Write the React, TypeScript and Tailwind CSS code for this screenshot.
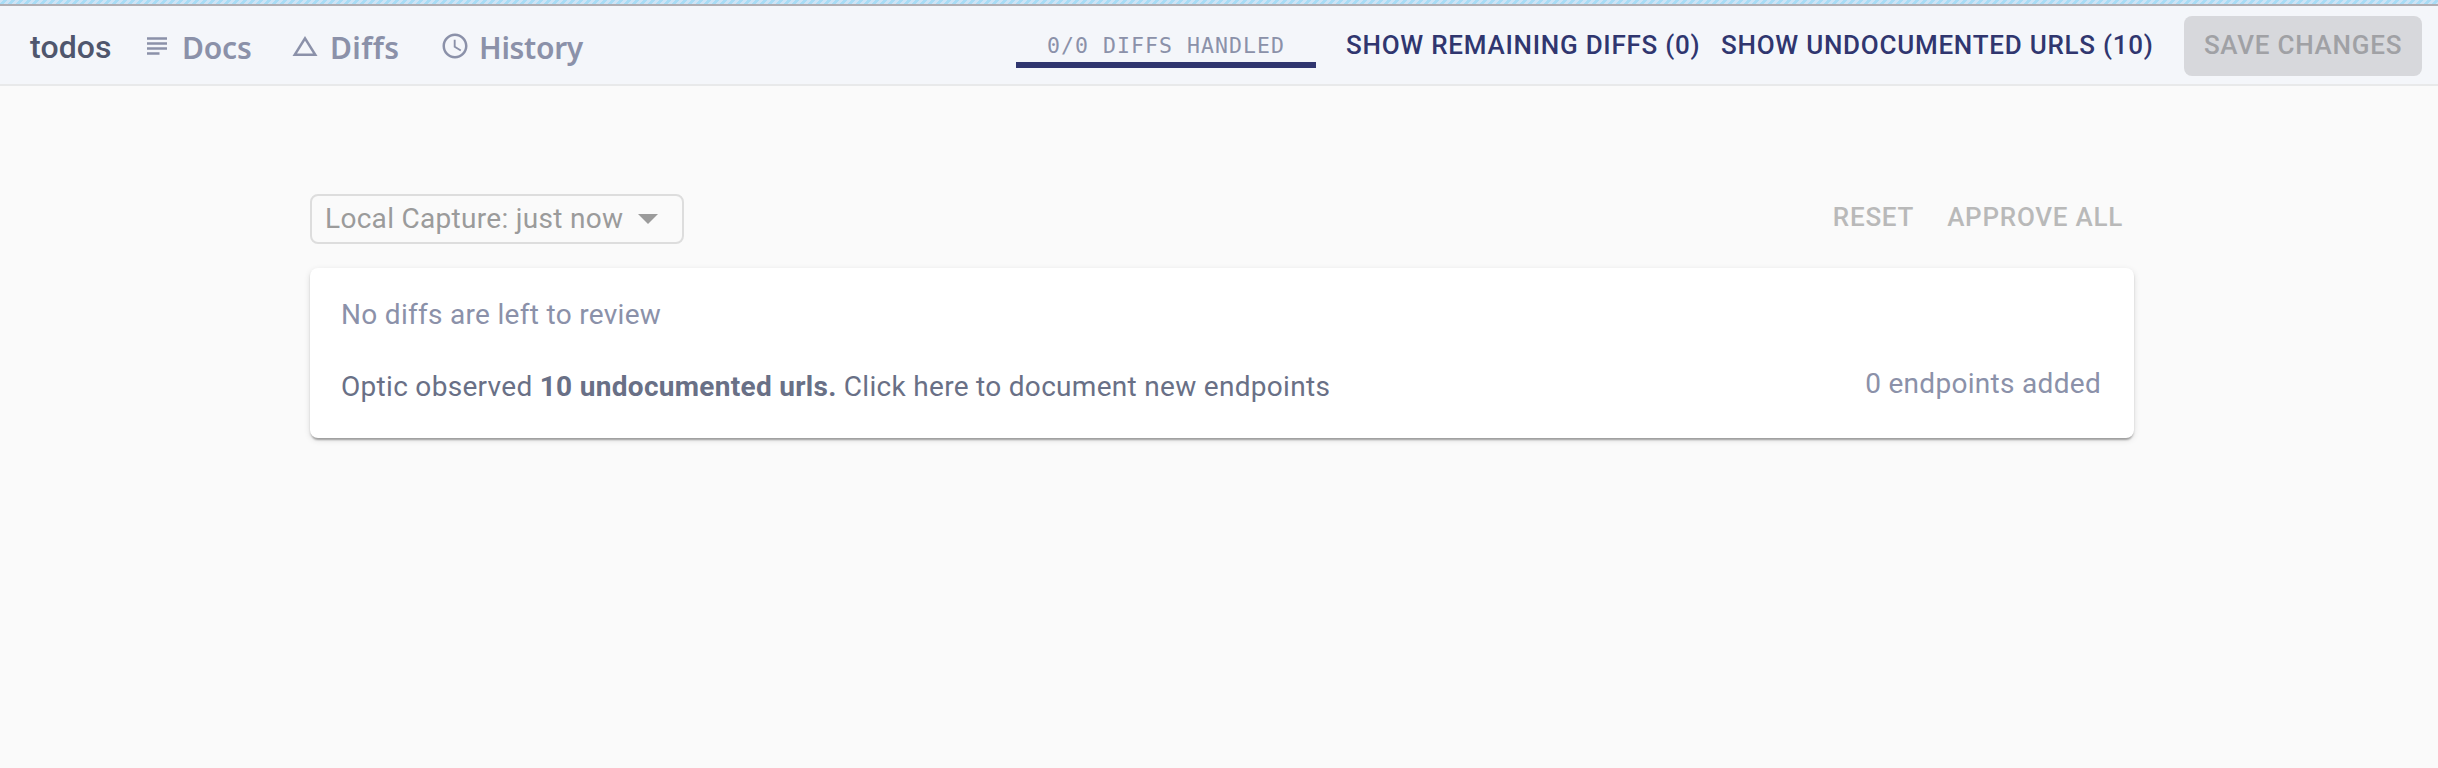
import type { ReactNode } from "react";

function NavLink({ icon, label, className, textClass }: { icon: ReactNode; label: string; className: string; textClass: string }) {
  return (
    <a className={`flex items-center whitespace-nowrap ${className}`}>
      <span className="pt-0.5">{icon}</span>
      <span className={`pt-[5px] font-['Noto_Sans',sans-serif] text-[30px] font-semibold leading-[40px] ${textClass}`}>{label}</span>
    </a>
  );
}

function SubjectIcon() {
  return (
    <svg className="block" width="30" height="30" viewBox="0 0 24 24" fill="currentColor">
      <path d="M14 17H4v2h10v-2zm6-8H4v2h16V9zM4 15h16v-2H4v2zM4 5v2h16V5H4z" />
    </svg>
  );
}

function TriangleIcon() {
  return (
    <svg className="block" width="30" height="30" viewBox="0 0 24 24" fill="currentColor">
      <path d="M12 7.77L18.39 18H5.61L12 7.77M12 4L2 20h20L12 4z" />
    </svg>
  );
}

function ClockIcon() {
  return (
    <svg className="block" width="30" height="30" viewBox="0 0 24 24" fill="currentColor">
      <path d="M11.99 2C6.47 2 2 6.48 2 12s4.47 10 9.99 10C17.52 22 22 17.52 22 12S17.52 2 11.99 2zM12 20c-4.42 0-8-3.58-8-8s3.58-8 8-8 8 3.58 8 8-3.58 8-8 8zm.5-13H11v6l5.25 3.15.75-1.23-4.5-2.67z" />
    </svg>
  );
}

export default function App() {
  return (
    <div className="flex h-[768px] w-full flex-col bg-[#fafafa] font-[Roboto,sans-serif]">
      <div className="h-1 bg-[#cde3f7] bg-[repeating-linear-gradient(135deg,#cde3f5_0px,#cde3f5_2.2px,#a8dcf5_2.8px,#a8dcf5_5px,#cde3f5_5.657px)]" />
      <div className="h-0.5 bg-[#b0afb4]" />
      <header className="flex h-20 items-start justify-between border-b-2 border-[#e8e9ea] bg-[#f4f6fa] pr-4">
        <div className="flex h-[78px] items-center pl-[30px] text-[#8b91a9]">
          <span className="w-[112px] pt-1 text-[32px] font-medium leading-10 tracking-[0.1px] text-[#4f566d]">todos</span>
          <NavLink className="w-[148px] gap-[10px]" textClass="tracking-[-0.2px]" label="Docs" icon={<SubjectIcon />} />
          <NavLink className="w-[150px] gap-[10px]" textClass="tracking-[0.4px]" label="Diffs" icon={<TriangleIcon />} />
          <NavLink className="gap-[9px]" textClass="tracking-[-0.3px]" label="History" icon={<ClockIcon />} />
        </div>
        <div className="flex items-start whitespace-nowrap text-[26px] font-medium leading-[30px] tracking-[0.743px] text-[#30366f]">
          <div className="mr-[30px] mt-[24px] flex w-[300px] flex-col items-center">
            <span className="h-8 pt-px font-['DejaVu_Sans_Mono',monospace] text-[21.5px] font-normal leading-[30px] tracking-[1.06px] text-[#8b91a9]">
              0/0 DIFFS HANDLED
            </span>
            <div className="h-1.5 w-full bg-[#30366f]" />
          </div>
          <button className="mt-6 w-[375px] text-left">SHOW REMAINING DIFFS (0)</button>
          <button className="mt-6 w-[463px] text-left">SHOW UNDOCUMENTED URLS (10)</button>
          <button className="mt-2.5 h-[60px] w-[238px] rounded-lg bg-[#d7d8dc] pb-0.5 text-[#a0a1a5]">SAVE CHANGES</button>
        </div>
      </header>
      <main className="mx-auto w-[1824px] translate-x-[3px] pt-[108px]">
        <div className="flex items-start justify-between">
          <div className="flex h-[50px] w-[374px] items-center rounded-lg border-2 border-[#dddddd] pl-[13px] text-[28px] tracking-[0.3px] text-[#9b9b9b]">
            <span className="whitespace-nowrap">Local Capture: just now</span>
            <svg className="ml-[15px]" width="20" height="10" viewBox="0 0 20 10" fill="currentColor">
              <path d="M0 0h20L10 10z" />
            </svg>
          </div>
          <div className="flex gap-[33px] pr-[11px] pt-2 text-[26px] font-medium leading-[30px] tracking-[0.743px] text-[#b9b9b9]">
            <button>RESET</button>
            <button>APPROVE ALL</button>
          </div>
        </div>
        <section className="mt-[24px] h-[170px] rounded-lg bg-white pl-[31px] pr-[33px] pt-[31px] text-[28px] leading-8 tracking-[0.3px] text-[#8b91a9] shadow-[0_4px_2px_-2px_rgba(0,0,0,0.2),0_2px_2px_0_rgba(0,0,0,0.14),0_2px_6px_0_rgba(0,0,0,0.12)]">
          <p>No diffs are left to review</p>
          <div className="mt-[37px] flex items-start justify-between">
            <p className="mt-[3px] text-[#697086]">
              Optic observed <b className="font-bold">10 undocumented urls.</b> Click here to document new endpoints
            </p>
            <p>0 endpoints added</p>
          </div>
        </section>
      </main>
    </div>
  );
}
